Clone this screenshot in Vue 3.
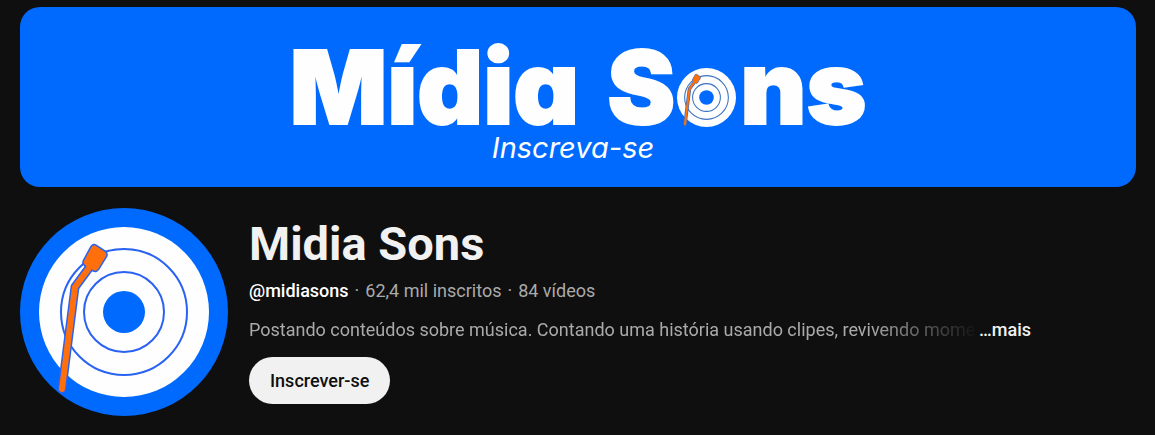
<script setup>
import { h } from 'vue'

const channel = {
  name: 'Midia Sons',
  handle: '@midiasons',
  subscribers: '62,4 mil inscritos',
  videos: '84 vídeos',
  description:
    'Postando conteúdos sobre música. Contando uma história usando clipes, revivendo mome',
}

const grooves = [63, 40]

const armPath = 'M-35 -44 L-49 -25 L-62 77'
const headPath =
  'M-28 -66 L-19 -60 Q-17 -58 -18 -56 L-26 -43 Q-28 -40 -31 -42 L-39 -47 Q-41 -49 -40 -51 L-33 -64 Q-31 -68 -28 -66 Z'

const TurntableRecord = () =>
  h('svg', { viewBox: '-85 -85 170 170', 'aria-hidden': 'true' }, [
    h('circle', { r: 85, fill: '#fefefe' }),
    ...grooves.map((r) => h('circle', { r, fill: 'none', class: 'line' })),
    h('circle', { r: 21, fill: '#006aff' }),
    h('path', { d: armPath, class: 'arm-edge' }),
    h('path', { d: headPath, class: 'head-edge' }),
    h('path', { d: armPath, class: 'arm' }),
    h('path', { d: headPath, class: 'head' }),
  ])
</script>

<template>
  <main class="page">
    <section class="banner" aria-label="Mídia Sons">
      <div class="wordmark">
        <span>Mídia</span>
        <span class="second">S<TurntableRecord class="record small" />ns</span>
      </div>
      <p class="tagline">Inscreva-se</p>
    </section>

    <header class="channel">
      <div class="avatar">
        <TurntableRecord class="record large" />
      </div>
      <div class="info">
        <h1>{{ channel.name }}</h1>
        <p class="meta">
          <strong>{{ channel.handle }}</strong>
          <span>·</span>
          <span>{{ channel.subscribers }}</span>
          <span>·</span>
          <span>{{ channel.videos }}</span>
        </p>
        <div class="about">
          <p class="description">{{ channel.description }}</p>
          <button type="button" class="more">…mais</button>
        </div>
        <button type="button" class="subscribe">Inscrever-se</button>
      </div>
    </header>
  </main>
</template>

<style>
body {
  background: #0f0f0f;
}
</style>

<style scoped>
.page {
  padding: 7px 19px 18px 20px;
  font-family: Roboto, "Liberation Sans", sans-serif;
  color: #f1f1f1;
}

p,
h1 {
  margin: 0;
}

.banner {
  display: flex;
  flex-direction: column;
  align-items: center;
  box-sizing: border-box;
  height: 180px;
  padding-top: 28px;
  border-radius: 20px;
  background: #006aff;
  color: #fefefe;
  font-family: Inter, "Open Sans", sans-serif;
  font-feature-settings: "cv11";
}

.wordmark {
  display: flex;
  gap: 28px;
  font-size: 102px;
  font-weight: 900;
  line-height: 104px;
  -webkit-text-stroke: 2px #fefefe;
}

.second {
  display: flex;
  align-items: center;
}

.tagline {
  padding-right: 10px;
  font-size: 29px;
  font-style: italic;
  font-weight: 400;
  line-height: 18px;
}

.record {
  display: block;
  flex: none;
  overflow: visible;
}

.small {
  width: 59px;
  height: 59px;
  margin: 20px 4px 0 2px;
  --line: #3a70c0;
  --line-width: 3px;
  --edge: 10px;
}

.large {
  width: 170px;
  height: 170px;
  --line: #2a62f2;
  --line-width: 2px;
  --edge: 9px;
}

.channel {
  display: flex;
  align-items: center;
  gap: 21px;
  margin-top: 21px;
}

.avatar {
  display: grid;
  place-items: center;
  flex: none;
  width: 208px;
  height: 208px;
  border-radius: 50%;
  background: #006aff;
}

.info {
  min-width: 0;
  padding-bottom: 6px;
}

h1 {
  font-size: 47px;
  font-weight: 700;
  line-height: 60px;
}

.meta,
.about {
  display: flex;
  font-size: 18px;
  line-height: 26px;
  color: #aaa;
}

.meta {
  gap: 6px;
  margin-top: 4px;
}

.meta strong {
  font-weight: 500;
  color: #fff;
}

.about {
  margin-top: 13px;
}

.description {
  width: 730px;
  overflow: hidden;
  white-space: nowrap;
  mask-image: linear-gradient(to right, #000 calc(100% - 110px), transparent);
}

.more {
  padding: 0;
  border: 0;
  background: none;
  font: inherit;
  font-weight: 500;
  color: #f1f1f1;
}

.subscribe {
  height: 47px;
  margin-top: 14px;
  padding: 0 21px;
  border: 0;
  border-radius: 24px;
  background: #f1f1f1;
  color: #0f0f0f;
  font: 500 18px/26px Roboto, "Liberation Sans", sans-serif;
}
</style>

<style>
.record .line {
  stroke: var(--line);
  stroke-width: var(--line-width);
}

.record .arm,
.record .arm-edge {
  fill: none;
  stroke-linejoin: round;
  stroke-linecap: round;
}

.record .arm-edge {
  stroke: var(--line);
  stroke-width: var(--edge);
}

.record .arm {
  stroke: #ff6f0c;
  stroke-width: 6px;
}

.record .head {
  fill: #ff6f0c;
}

.record .head-edge {
  fill: var(--line);
  stroke: var(--line);
  stroke-width: 3px;
}
</style>
